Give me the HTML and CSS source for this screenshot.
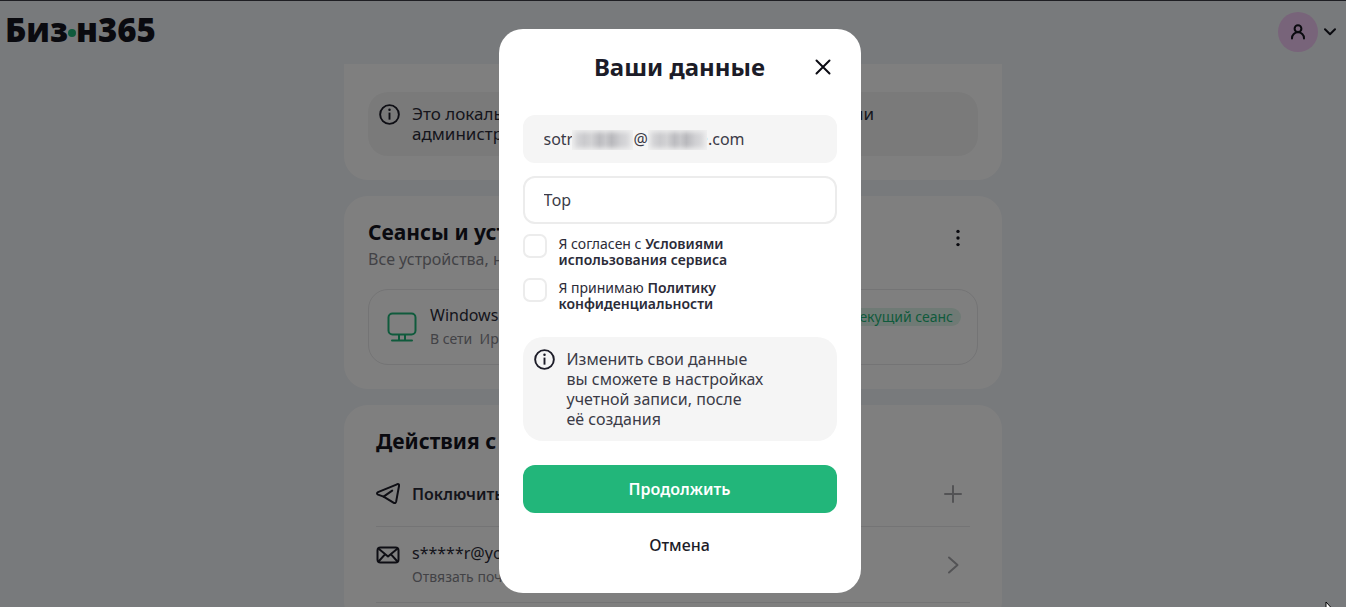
FILE: index.html
```html
<!DOCTYPE html>
<html lang="ru">
<head>
<meta charset="UTF-8">
<meta name="viewport" content="width=device-width, initial-scale=1">
<title>Бизон365</title>
<link rel="stylesheet" href="styles.css">
</head>
<body>
<header class="header">
  <a class="logo" href="#">Биз<span class="logo-dot"></span>н365</a>
  <button class="profile" type="button" aria-label="Профиль">
    <span class="avatar">
      <svg width="16" height="16" viewBox="0 0 16 16" fill="none" stroke="#15151f" stroke-width="2" stroke-linecap="round"><circle cx="8" cy="4.7" r="3.4"/><path d="M2 14.6v-.4a6 6 0 0 1 12 0v.4"/></svg>
    </span>
    <svg width="12" height="8" viewBox="0 0 12 8" fill="none" stroke="#15151f" stroke-width="2" stroke-linecap="round" stroke-linejoin="round"><path d="M1 1.2l5 5 5-5"/></svg>
  </button>
</header>

<main class="page">
  <section class="card card-top">
    <div class="notice">
      <svg class="icon-info" viewBox="0 0 22 22"><circle cx="11" cy="11" r="9.8" fill="none" stroke="#1c1c28" stroke-width="2"/><path d="M11 9v7.4" stroke="#1c1c28" stroke-width="2"/><circle cx="11" cy="6" r="1.3" fill="#1c1c28"/></svg>
      <p>Это локальная учетная запись. Ей может управлять или администратор организации</p>
    </div>
  </section>

  <section class="card">
    <div class="card-head">
      <div>
        <h2>Сеансы и устройства</h2>
        <p class="muted">Все устройства, на которых выполнен вход</p>
      </div>
      <button class="icon-btn" type="button" aria-label="Ещё">
        <svg width="6" height="18" viewBox="0 0 6 18" fill="#15151f"><circle cx="3" cy="2.4" r="1.7"/><circle cx="3" cy="9" r="1.7"/><circle cx="3" cy="15.6" r="1.7"/></svg>
      </button>
    </div>
    <div class="session">
      <svg width="30" height="30" viewBox="0 0 30 30" fill="none" stroke="#1fb578" stroke-width="2" stroke-linecap="round"><rect x="1.5" y="1.5" width="27" height="21" rx="4"/><path d="M12 23v5M18 23v5M5 28.5h20"/></svg>
      <div class="session-text">
        <span>Windows 10</span>
        <small>В сети &nbsp;Иркутск</small>
      </div>
      <span class="tag">Текущий сеанс</span>
    </div>
  </section>

  <section class="card card-actions">
    <h2>Действия с аккаунтом</h2>
    <ul class="actions">
      <li class="action">
        <svg width="24" height="22" viewBox="0 0 24 22" fill="none" stroke="#1c1c28" stroke-width="2" stroke-linecap="round" stroke-linejoin="round"><path d="M2 9.2L21 1.3q2.4-.8 2 1.7l-2.8 15.4q-.6 2.6-2.8 1.2L7.6 13.6 2 11.6q-2-1.2 0-2.4z"/><path d="M7.6 13.6l8.6-6"/></svg>
        <strong>Поключить Telegram</strong>
        <svg class="action-end" width="18" height="18" viewBox="0 0 18 18" stroke="#a6a6aa" stroke-width="2" stroke-linecap="round"><path d="M9 1v16M1 9h16"/></svg>
      </li>
      <li class="action action-mail">
        <svg class="icon-mail" width="24" height="18" viewBox="0 0 24 18" fill="none" stroke="#1c1c28" stroke-width="2" stroke-linecap="round" stroke-linejoin="round"><rect x="1.5" y="1.5" width="21" height="15" rx="3"/><path d="M3 3l9 7.4L21 3M3 15l6-6.6M21 15l-6-6.6"/></svg>
        <div class="action-text">
          <span>s*****r@yopmail.com</span>
          <small>Отвязать почту</small>
        </div>
        <svg class="action-end" width="18" height="18" viewBox="0 0 18 18" fill="none" stroke="#a6a6aa" stroke-width="2" stroke-linecap="round" stroke-linejoin="round"><path d="M5 1.5L13.5 9 5 16.5"/></svg>
      </li>
    </ul>
  </section>
</main>

<div class="overlay">
  <form class="modal" role="dialog" aria-labelledby="modal-title">
    <div class="modal-head">
      <h1 id="modal-title">Ваши данные</h1>
      <button class="close" type="button" aria-label="Закрыть">
        <svg width="16" height="16" viewBox="0 0 16 16" stroke="#0c0c14" stroke-width="2" stroke-linecap="round"><path d="M1.5 1.5l13 13M14.5 1.5l-13 13"/></svg>
      </button>
    </div>
    <div class="field">
      <input class="input input-filled" type="text" value="sotr••••••••••@••••••••••.com" readonly aria-label="Почта">
      <span class="mask mask-name"></span>
      <span class="mask mask-domain"></span>
    </div>
    <input class="input" type="text" value="Тор" aria-label="Имя">
    <div class="checks">
      <label class="check">
        <input type="checkbox">
        <span>Я согласен с <b>Условиями<br>использования сервиса</b></span>
      </label>
      <label class="check">
        <input type="checkbox">
        <span>Я принимаю <b>Политику<br>конфиденциальности</b></span>
      </label>
    </div>
    <div class="notice notice-modal">
      <svg class="icon-info" viewBox="0 0 22 22"><circle cx="11" cy="11" r="9.8" fill="none" stroke="#1c1c28" stroke-width="2"/><path d="M11 9v7.4" stroke="#1c1c28" stroke-width="2"/><circle cx="11" cy="6" r="1.3" fill="#1c1c28"/></svg>
      <p>Изменить свои данные<br>вы сможете в настройках<br>учетной записи, после<br>её создания</p>
    </div>
    <button class="btn btn-primary" type="submit">Продолжить</button>
    <button class="btn btn-text" type="button">Отмена</button>
  </form>
</div>

<svg class="cursor" width="12" height="19" viewBox="0 0 12 19"><path d="M1 1v15l3.5-3.2 2.3 5.2 2-.9-2.3-5.1H11z" fill="#fff" stroke="#000"/></svg>
</body>
</html>
```
FILE: styles.css
```css
* {
  box-sizing: border-box;
}
body {
  margin: 0;
  height: 100vh;
  overflow: hidden;
  background: #f1f4f8;
  border-top: 1px solid #3c3c46;
  color: #2b2b38;
  font: 16px/20px "Noto Sans", "Open Sans", sans-serif;
}
h1, h2, p, ul {
  margin: 0;
  padding: 0;
}
button {
  padding: 0;
  border: 0;
  background: none;
  font: inherit;
  cursor: pointer;
}

/* header */
.header {
  display: flex;
  align-items: center;
  justify-content: space-between;
  height: 63px;
  padding: 0 10px 2px 5px;
}
.logo {
  display: flex;
  align-items: center;
  padding-bottom: 4px;
  color: #15151f;
  font: 800 33px/40px "Open Sans", sans-serif;
  text-decoration: none;
}
.logo-dot {
  width: 8px;
  height: 8px;
  margin-top: 6px;
  border-radius: 50%;
  background: #1fb578;
}
.profile {
  display: flex;
  align-items: center;
  gap: 6px;
}
.avatar {
  display: grid;
  place-items: center;
  width: 40px;
  height: 40px;
  border-radius: 50%;
  background: #f0c8f4;
}

/* page */
.page {
  display: flex;
  flex-direction: column;
  gap: 16px;
  max-width: 658px;
  margin: 0 auto;
}
.card {
  padding: 22px 24px 24px;
  border-radius: 24px;
  background: #fff;
}
.card-top {
  padding-top: 28px;
  border-radius: 0 0 24px 24px;
}
.card-top .notice {
  font-size: 17px;
}
.card h2 {
  color: #15151f;
  font-size: 21px;
  line-height: 28px;
}
.card-head {
  display: flex;
  justify-content: space-between;
  align-items: flex-start;
}
.icon-btn {
  width: 40px;
  height: 44px;
}
.muted {
  color: #85858c;
  line-height: 26px;
}
.notice {
  display: flex;
  gap: 12px;
  padding: 12px 11px;
  border-radius: 20px;
  background: #f5f5f5;
}
.icon-info {
  flex: none;
  width: 21px;
  height: 21px;
}
.session {
  display: flex;
  align-items: center;
  gap: 13px;
  height: 76px;
  margin-top: 17px;
  padding: 0 16px 0 18px;
  border: 1px solid #e8e8ea;
  border-radius: 20px;
}
.session-text {
  flex: 1;
  display: grid;
  line-height: 23px;
}
small {
  color: #85858c;
  font-size: 14px;
}
.tag {
  align-self: flex-start;
  margin-top: 18px;
  padding: 0 8px;
  border-radius: 10px;
  background: #dff5eb;
  color: #1fb578;
  font-size: 14px;
  line-height: 18px;
}
.card-actions {
  padding: 22px 32px;
}
.actions {
  margin-top: 7px;
  list-style: none;
}
.action {
  display: flex;
  align-items: center;
  gap: 12px;
  height: 65px;
  padding-right: 8px;
  border-bottom: 1px solid #e8e8ea;
}
.action strong {
  font-weight: 600;
}
.action-mail {
  height: 76px;
}
.icon-mail {
  align-self: flex-start;
  margin-top: 19px;
}
.action-text {
  display: grid;
  line-height: 23px;
}
.action-end {
  margin-left: auto;
}

/* modal */
.overlay {
  position: fixed;
  inset: 0;
  display: flex;
  justify-content: center;
  align-items: flex-start;
  padding: 29px 0 0 13px;
  background: rgba(0, 0, 0, 0.5);
}
.modal {
  display: flex;
  flex-direction: column;
  width: 362px;
  padding: 24px;
  border-radius: 24px;
  background: #fff;
}
.modal-head {
  display: grid;
  grid-template-columns: 28px 1fr 28px;
  align-items: center;
  height: 28px;
  margin-bottom: 34px;
}
.modal-head h1 {
  grid-column: 2;
  color: #1c1c28;
  font-size: 24px;
  line-height: 28px;
  text-align: center;
}
.close {
  display: grid;
  place-items: center;
  height: 28px;
}
.field {
  position: relative;
  margin-bottom: 13px;
}
.input {
  display: block;
  width: 100%;
  height: 48px;
  padding: 0 19px;
  border: 2px solid #ececec;
  border-radius: 12px;
  background: #fff;
  color: #3b3b47;
  font: inherit;
  outline: none;
}
.input-filled {
  border-color: #f5f5f5;
  background: #f5f5f5;
}
/* hides the private part of the address */
.mask {
  position: absolute;
  top: 15px;
  height: 20px;
  background: linear-gradient(90deg, #dcdcde, #cacacd 20%, #d2d2d4 32%, #bcbcc0 45%, #c8c8cb 55%, #b8b8bc 65%, #cfcfd2 80%, #e0e0e2);
  box-shadow: inset 0 0 5px 2px #f0f0f0;
}
.mask-name {
  left: 49px;
  width: 61px;
}
.mask-domain {
  left: 125px;
  width: 59px;
}
.checks {
  display: grid;
  gap: 10px;
  margin: 10px 0 25px;
}
.check {
  display: flex;
  gap: 12px;
  font-size: 14px;
  line-height: 16px;
}
.check span {
  padding-top: 2px;
}
.check input {
  appearance: none;
  flex: none;
  width: 24px;
  height: 24px;
  margin: 0;
  border: 2px solid #ececec;
  border-radius: 7px;
}
.check b {
  font-weight: 600;
}
.notice-modal {
  color: #3b3b47;
}
.btn {
  height: 48px;
  border-radius: 12px;
  font-size: 16px;
  font-weight: 600;
}
.btn-primary {
  margin-top: 24px;
  background: #22b67a;
  color: #fff;
}
.btn-text {
  margin-top: 8px;
  color: #1c1c28;
  font-weight: 500;
}

.cursor {
  position: fixed;
  right: 9px;
  bottom: -13px;
}
```
